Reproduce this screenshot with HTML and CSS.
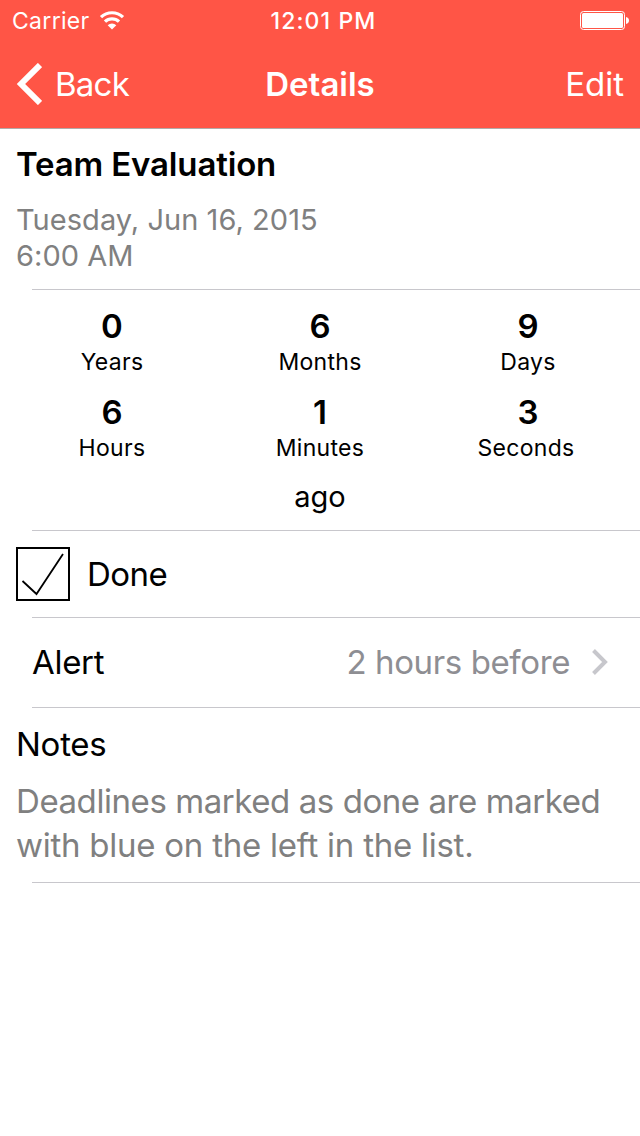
FILE: index.html
```html
<!DOCTYPE html>
<html lang="en">
<head>
<meta charset="utf-8">
<title>Details</title>
<link rel="stylesheet" href="styles.css">
</head>
<body>
<header class="header">
  <div class="status">
    <div class="carrier"><span class="t-carrier">Carrier</span>
      <svg class="wifi" width="26" height="20" viewBox="0 0 26 20" fill="none" stroke="#fff" stroke-width="3.200"><path d="M2 7.200a15.800 15.800 0 0 1 22 0M6 11.700a10 10 0 0 1 14 0"/><path d="M13 19.500l-4.300-4.300a6.200 6.200 0 0 1 8.600 0z" fill="#fff" stroke="none"/></svg>
    </div>
    <span class="t-time">12:01 PM</span>
    <svg class="battery" width="49" height="19" viewBox="0 0 49 19"><rect x=".5" y=".5" width="44" height="18" rx="3" fill="none" stroke="#fff"/><rect x="2" y="2" width="41" height="15" rx="1.500" fill="#fff"/><path d="M46 6q3 .8 3 3.500t-3 3.500z" fill="#fff"/></svg>
  </div>
  <nav class="nav">
    <a class="back"><svg width="26" height="42" viewBox="0 0 26 42" fill="none" stroke="#fff" stroke-width="6"><path d="M24 2L5 21l19 19"/></svg><span class="t-back">Back</span></a>
    <h1 class="t-nav">Details</h1>
    <a class="t-edit">Edit</a>
  </nav>
</header>
<main>
  <section class="event">
    <h2 class="t-title">Team Evaluation</h2>
    <p class="t-date">Tuesday, Jun 16, 2015</p>
    <p class="t-hour">6:00 AM</p>
  </section>
  <section class="countdown">
    <div class="units">
      <div class="unit"><b>0</b><span class="t-years">Years</span></div>
      <div class="unit"><b>6</b><span class="t-months">Months</span></div>
      <div class="unit"><b>9</b><span class="t-days">Days</span></div>
      <div class="unit"><b>6</b><span class="t-hours">Hours</span></div>
      <div class="unit"><b>1</b><span class="t-minutes">Minutes</span></div>
      <div class="unit"><b>3</b><span class="t-seconds">Seconds</span></div>
    </div>
    <p class="t-ago">ago</p>
  </section>
  <section class="done">
    <svg width="54" height="54" viewBox="0 0 54 54" fill="none" stroke="#000" stroke-width="2"><rect x="1" y="1" width="52" height="52"/><path d="M6.500 34L20.500 47 47 7" stroke-width="1.800"/></svg>
    <span class="t-done">Done</span>
  </section>
  <section class="alert">
    <span class="t-alert">Alert</span>
    <span class="t-before">2 hours before</span>
    <svg width="17" height="26" viewBox="0 0 17 26" fill="none" stroke="#c7c7cc" stroke-width="4"><path d="M2.500 1.500L14 13 2.500 24.500"/></svg>
  </section>
  <section class="notes">
    <h3 class="t-notes">Notes</h3>
    <p class="t-line1">Deadlines marked as done are marked</p>
    <p class="t-line2">with blue on the left in the list.</p>
  </section>
</main>
</body>
</html>
```
FILE: styles.css
```css
* { box-sizing: border-box; margin: 0; padding: 0; }
body { width: 640px; height: 1136px; background: #fff; color: #000; font-family: Inter, "Liberation Sans", sans-serif; white-space: nowrap; overflow: hidden; }
svg { display: block; flex: none; }
.header { height: 129px; background: #ff5546; color: #fff; border-bottom: 1px solid #b2aaa8; }
.status { height: 40px; display: grid; grid-template-columns: 1fr auto 1fr; align-items: center; padding: 1px 11px 0 12px; font-size: 23px; }
.carrier { display: flex; align-items: center; gap: 9px; }
.t-carrier { letter-spacing: .3px; }
.wifi { margin-top: -2px; }
.t-time { font-weight: 500; font-size: 23px; letter-spacing: 1.1px; margin-left: 6px; }
.battery { justify-self: end; }
.nav { height: 88px; display: grid; grid-template-columns: 1fr auto 1fr; align-items: center; padding: 0 16px; font-size: 33px; }
.back { display: flex; align-items: center; gap: 13px; }
.t-back { letter-spacing: -.75px; }
.t-nav { font-size: 33px; font-weight: 600; }
.t-edit { justify-self: end; }
section { position: relative; }
section::after { content: ""; position: absolute; left: 32px; right: 0; bottom: 0; height: 1px; background: #c8c7cc; }
.event { height: 161px; padding: 15px 16px 0; }
.t-title { font-size: 33px; line-height: 40px; font-weight: 600; letter-spacing: -.15px; }
.t-date { margin-top: 18px; }
.t-date, .t-hour { font-size: 29px; line-height: 36px; color: #808080; letter-spacing: .04px; }
.countdown { height: 241px; padding: 16px 8px 0; text-align: center; }
.units { display: grid; grid-template-columns: repeat(3, 208px); grid-auto-rows: 86px; }
.unit { display: flex; flex-direction: column; align-items: center; }
.unit b { font-size: 33px; line-height: 40px; font-weight: 600; }
.unit span { font-size: 23px; line-height: 32px; letter-spacing: .3px; }
.unit .t-seconds { margin-right: 4px; }
.t-ago { font-size: 29px; line-height: 36px; margin-top: 1px; }
.done { height: 87px; display: flex; align-items: center; gap: 17px; padding: 0 0 2px 16px; font-size: 33px; }
.t-done { letter-spacing: -.5px; }
.alert { height: 90px; display: flex; align-items: center; padding: 0 32px 2px; font-size: 33px; }
.t-alert { letter-spacing: -.3px; }
.t-before { margin-left: auto; margin-right: 21px; color: #8e8e93; letter-spacing: -.38px; }
.notes { height: 175px; padding: 16px 16px 0; }
.t-notes { font-size: 33px; line-height: 40px; font-weight: 400; margin-bottom: 15px; letter-spacing: -.25px; }
.t-line1, .t-line2 { font-size: 33px; line-height: 44px; color: #808080; }
.t-line1 { letter-spacing: -.43px; }
.t-line2 { letter-spacing: -.25px; }
```
